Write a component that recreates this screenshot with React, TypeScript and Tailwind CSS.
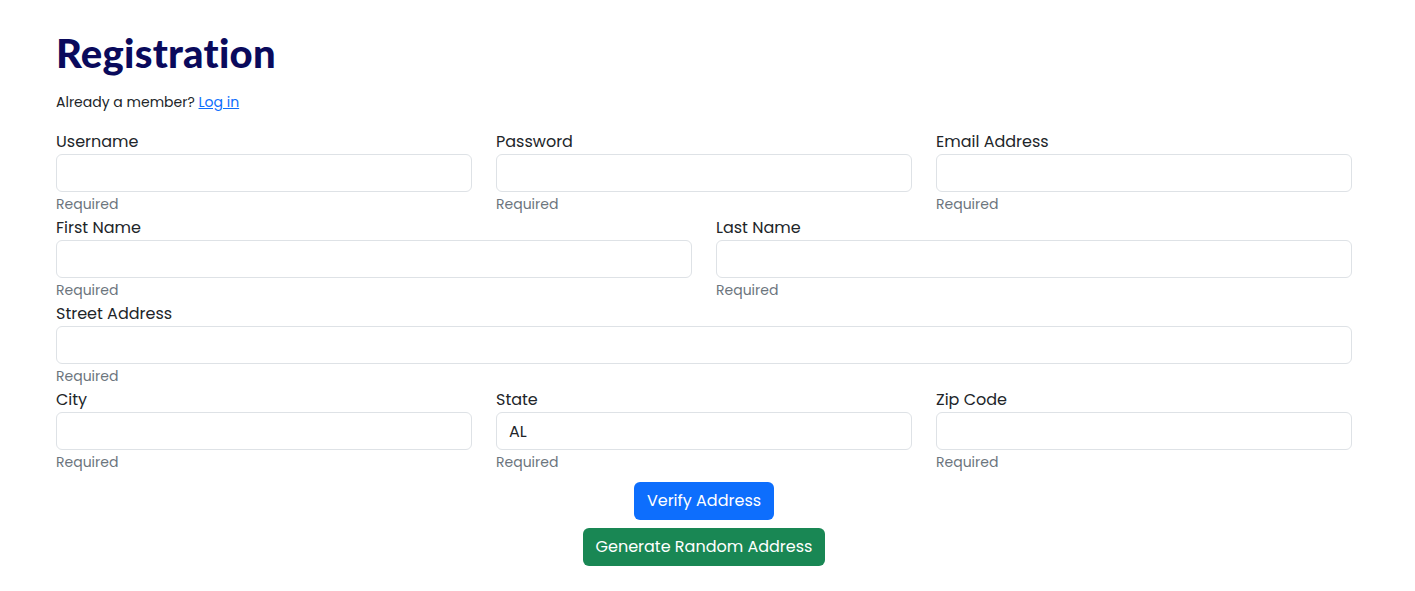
import { useState } from 'react'

type Field = { label: string; value?: string }

const rows: { cols: string; fields: Field[] }[] = [
  { cols: 'grid-cols-3', fields: [{ label: 'Username' }, { label: 'Password' }, { label: 'Email Address' }] },
  { cols: 'grid-cols-2', fields: [{ label: 'First Name' }, { label: 'Last Name' }] },
  { cols: 'grid-cols-1', fields: [{ label: 'Street Address' }] },
  { cols: 'grid-cols-3', fields: [{ label: 'City' }, { label: 'State', value: 'AL' }, { label: 'Zip Code' }] },
]

const FormField = ({ label, value }: Field) => {
  const [val, setVal] = useState(value ?? '')
  return (
    <div className="flex flex-col">
      <label className="text-[16px] leading-[24px] text-[#212529]">{label}</label>
      <input
        value={val}
        onChange={(e) => setVal(e.target.value)}
        className="h-[38px] w-full rounded-[6px] border border-[#dee2e6] bg-white px-3 text-[16px] text-[#212529] outline-none"
      />
      <span className="text-[14px] leading-[24px] text-[#6c757d]">Required</span>
    </div>
  )
}

export default function App() {
  return (
    <div className="min-h-screen bg-white font-['Poppins','Inter',sans-serif] text-[#212529]">
      <div className="ml-[56px] w-[1296px] pt-[31px]">
        <h1 className="font-['Lato',sans-serif] text-[40px] font-black leading-[44px] tracking-[0.25px] text-[#0a0a5c]">
          Registration
        </h1>
        <p className="mt-[17px] text-[14px] leading-[20px]">
          Already a member?{' '}
          <a href="#" className="text-[#0d6efd] underline">
            Log in
          </a>
        </p>
        <div className="mt-[18px] flex flex-col">
          {rows.map((row, i) => (
            <div key={i} className={`grid ${row.cols} gap-x-6`}>
              {row.fields.map((f) => (
                <FormField key={f.label} {...f} />
              ))}
            </div>
          ))}
        </div>
        <div className="mt-[8px] flex flex-col items-center gap-2">
          <button className="h-[38px] rounded-[6px] bg-[#0d6efd] px-[13px] text-[16px] text-white">Verify Address</button>
          <button className="h-[38px] rounded-[6px] bg-[#198754] px-[13px] text-[16px] text-white">
            Generate Random Address
          </button>
        </div>
      </div>
    </div>
  )
}
